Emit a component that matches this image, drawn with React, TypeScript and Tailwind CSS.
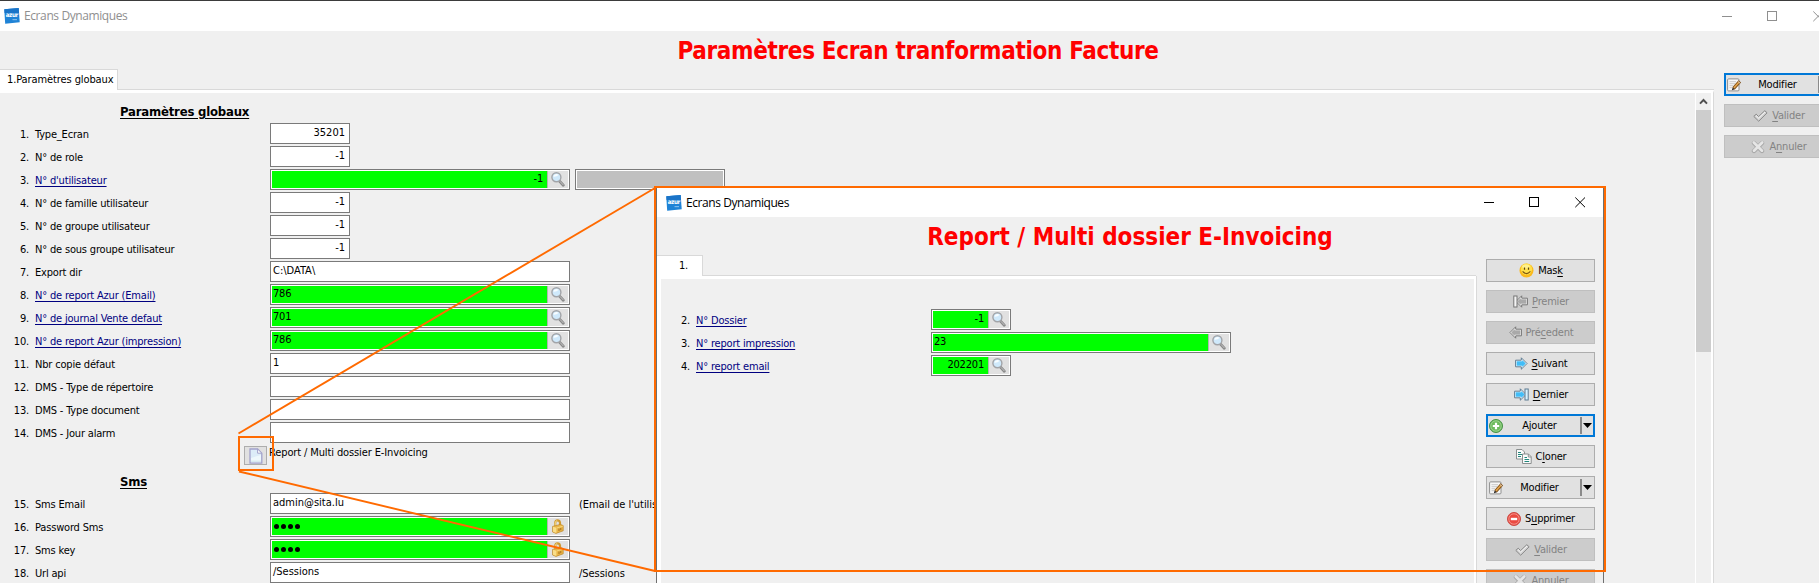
import React from "react";

function AzurLogo() {
  return (
    <svg width="16" height="16" viewBox="0 0 16 16" className="shrink-0">
      <path d="M0.3 1.3 L14.7 0 L15.7 14.3 L1.2 15.8 Z" fill="#1f83d6" />
      <path d="M0.3 1.3 L14.7 0 L15 5 L0.6 5 Z" fill="#1a74c8" />
      <text x="7.9" y="9" textAnchor="middle" fontSize="6.2" fontWeight="700" fill="#ffffff" fontFamily="DejaVu Sans Condensed, sans-serif" textLength="12.5">azur</text>
      <rect x="8.5" y="11" width="4.5" height="1.2" fill="#7cb8ea" />
    </svg>
  );
}

function Magnifier() {
  return (
    <svg width="14" height="15" viewBox="0 0 14 15" className="shrink-0">
      <path d="M8.4 9 L12.3 13.2" stroke="#8a8a8a" strokeWidth="2.8" strokeLinecap="round" />
      <path d="M9.2 9.6 L12.2 12.8" stroke="#c4c4c4" strokeWidth="1" strokeLinecap="round" />
      <circle cx="5.4" cy="5.2" r="4.5" fill="#cfe9fb" stroke="#a2a4a8" strokeWidth="1.4" />
      <path d="M2.4 4.8 A3 3 0 0 1 7.6 3 A6 5 0 0 1 2.4 4.8Z" fill="#f8fdff" />
    </svg>
  );
}

function Padlock() {
  return (
    <svg width="14" height="15" viewBox="0 0 14 15" className="shrink-0">
      <path d="M4.2 7.5 V3.8 Q4.4 1.4 6.4 1.3 Q8.6 1.2 9 3.6 V6.5" fill="none" stroke="#cf9a32" strokeWidth="2.2" />
      <path d="M4.2 7 V3.9 Q4.5 1.9 6.2 1.6" fill="none" stroke="#f8e08e" strokeWidth="1" />
      <path d="M1.6 7.4 L9.4 5.4 L12.2 6.6 V11.8 L5 14.4 L1.6 13Z" fill="#eab547" stroke="#bd8626" strokeWidth="0.7" />
      <path d="M2 7.8 L5.4 8.8 V14 L2 12.8Z" fill="#f9de88" />
      <path d="M5.6 9 L11.8 7.2" stroke="#f7d77c" strokeWidth="1" />
      <path d="M8 9.6 V12 M9.8 9 V11.2" stroke="#9a6415" strokeWidth="0.9" />
    </svg>
  );
}

function DocIcon() {
  return (
    <svg width="14" height="16" viewBox="0 0 14 16">
      <path d="M1 1 H8.6 L12.8 5.2 V15 H1Z" fill="#dcecf8" stroke="#a3a3cb" strokeWidth="1.3" />
      <path d="M2 10 L12 7 V14.2 H2Z" fill="#eef8fc" />
      <path d="M8.6 1 V5.2 H12.8Z" fill="#ffffff" stroke="#a3a3cb" />
      <path d="M2.5 13.2 H12" stroke="#a9cbd9" strokeDasharray="1 1" />
    </svg>
  );
}

function Smiley() {
  return (
    <svg width="15" height="15" viewBox="0 0 15 15">
      <circle cx="7.5" cy="7.5" r="7" fill="#fbb91c" />
      <circle cx="7.5" cy="6.2" r="5.6" fill="#ffe04a" />
      <ellipse cx="7" cy="3.4" rx="3.8" ry="2" fill="#fff08c" />
      <path d="M5.5 4.5 V6.8 M9.5 4.5 V6.8" stroke="#5c4310" strokeWidth="1.2" />
      <path d="M3.6 8.4 Q7.5 12.8 11.4 8.4" fill="none" stroke="#7a5410" strokeWidth="1.1" />
    </svg>
  );
}

function ArrowIcon({ dir, bar, off }: { dir: "left" | "right"; bar?: boolean; off?: boolean }) {
  const line = off ? "#747474" : "#5d7b91";
  const fill = off ? "#a9a9a9" : "#42bdf7";
  return (
    <svg width={bar ? 15 : 13} height="13" viewBox={bar ? "0 0 15 13" : "0 0 13 13"} className={dir === "left" ? "-scale-x-100" : ""}>
      <path d="M0.6 3.2 H6.3 V0.8 L12 6.5 L6.3 12.2 V9.8 H0.6Z" fill="#ffffff" stroke={line} strokeWidth="1" />
      <path d="M1.6 4.2 H7.3 V3 L10.8 6.5 L7.3 10 V8.8 H1.6Z" fill={fill} />
      {bar && <rect x="11" y="1" width="3.2" height="11" fill={off ? "#f4f4f4" : "#d9f2ff"} stroke={line} strokeWidth="1" />}
    </svg>
  );
}

function PlusIcon() {
  return (
    <svg width="14" height="14" viewBox="0 0 14 14">
      <circle cx="7" cy="7" r="6.5" fill="#6dbb5e" stroke="#479145" />
      <circle cx="7" cy="7" r="5.2" fill="none" stroke="#a4d797" strokeWidth="0.8" />
      <path d="M7 3.8 V10.2 M3.8 7 H10.2" stroke="#ffffff" strokeWidth="2.2" />
    </svg>
  );
}

function MinusIcon() {
  return (
    <svg width="14" height="14" viewBox="0 0 14 14">
      <circle cx="7" cy="7" r="6.5" fill="#ea4a41" stroke="#c94a44" />
      <circle cx="7" cy="7" r="5.2" fill="none" stroke="#f79f97" strokeWidth="0.8" />
      <path d="M3.8 7 H10.2" stroke="#ffffff" strokeWidth="2.4" />
    </svg>
  );
}

function CloneIcon() {
  return (
    <svg width="16" height="15" viewBox="0 0 16 15">
      <path d="M0.5 0.5 H6 L8.5 3 V10 H0.5Z" fill="#fbfbfb" stroke="#8a8f8f" />
      <path d="M2 3.5 H5 M2 5.5 H6 M2 7.5 H5" stroke="#22877c" />
      <path d="M6.5 5 H12.5 L15.2 7.7 V14.5 H6.5Z" fill="#fbfbfb" stroke="#8a8f8f" />
      <path d="M12.3 5 V8 H15" fill="none" stroke="#8a8f8f" />
      <path d="M8.5 8.5 H11 M8.5 10.5 H13.2 M8.5 12.5 H13.2" stroke="#22877c" />
    </svg>
  );
}

function EditIcon() {
  return (
    <svg width="15" height="14" viewBox="0 0 15 14">
      <rect x="0.6" y="0.9" width="11.4" height="12" rx="1" fill="#f7f7f7" stroke="#8f8f8f" />
      <path d="M2.5 3.7 H9 M2.5 5.7 H8 M2.5 7.7 H6 M2.5 9.7 H5" stroke="#c9c9c9" />
      <path d="M6.6 10.4 L12.8 3.4" stroke="#7c4b13" strokeWidth="3.4" />
      <path d="M6.9 9.9 L12.4 3.7" stroke="#e0a24c" strokeWidth="1.7" />
      <path d="M4.9 12.2 L5.7 9.4 L7.8 11.2Z" fill="#1f1a16" />
      <path d="M11.2 3.6 L13.2 5.4" stroke="#d8d8d8" strokeWidth="0.9" />
    </svg>
  );
}

function CheckIcon() {
  return (
    <svg width="15" height="12" viewBox="0 0 15 12">
      <path d="M0.8 6.4 L3.2 4.2 L5.6 6.6 L11.8 0.7 L14.1 2.8 L5.7 11.2Z" fill="#d6d6d6" stroke="#868686" />
      <path d="M3 5.5 L5.6 8 L12 2" fill="none" stroke="#f4f4f4" />
    </svg>
  );
}

function CrossIcon() {
  return (
    <svg width="14" height="14" viewBox="0 0 14 14">
      <path d="M3 3 L11 11 M11 3 L3 11" stroke="#a6a6a6" strokeWidth="4.4" strokeLinecap="round" />
      <path d="M2.8 2.6 L11 10.8 M11.2 2.6 L3 10.8" stroke="#e6e6e6" strokeWidth="2.8" strokeLinecap="round" />
    </svg>
  );
}

function WindowControls({ dim }: { dim?: boolean }) {
  return (
    <svg width="102" height="11" viewBox="0 0 102 11" className={dim ? "shrink-0 text-[#8f8f8f]" : "shrink-0 text-black"} fill="none" stroke="currentColor">
      <path d="M0 5.5 H10" />
      <rect x="45.5" y="0.5" width="9" height="9" />
      <path d="M91.3 0.5 L101 10.2 M101 0.5 L91.3 10.2" />
    </svg>
  );
}

function Mnemonic({ text }: { text: string }) {
  const [before, key, after] = text.split("_");
  return (
    <span className="whitespace-pre pt-[2px]">
      {before}
      {key && <span className="underline underline-offset-2">{key}</span>}
      {after}
    </span>
  );
}

function ActionButton({ icon, label, disabled }: { icon: React.ReactNode; label: string; disabled?: boolean }) {
  return (
    <button
      className={
        disabled
          ? "flex h-[23px] w-[109px] shrink-0 items-center justify-center gap-1 border border-[#bfbfbf] bg-[#cccccc] pl-px text-[#838383]"
          : "flex h-[23px] w-[109px] shrink-0 items-center justify-center gap-1 border border-[#adadad] bg-[#e1e1e1] pl-px text-black"
      }
    >
      {icon}
      <Mnemonic text={label} />
    </button>
  );
}

function SplitButton({ icon, label, focused }: { icon: React.ReactNode; label: string; focused?: boolean }) {
  return (
    <button
      className={
        focused
          ? "flex h-[23px] w-[109px] shrink-0 items-center border-2 border-[#0078d7] bg-[#e1e1e1] pl-px"
          : "flex h-[23px] w-[109px] shrink-0 items-center border border-[#adadad] bg-[#e1e1e1] pl-[2px] pr-px"
      }
    >
      <span className="w-[15px]">{icon}</span>
      <span className="flex-1 pt-[2px] pl-[9px] text-center">{label}</span>
      <span className="ml-[14px] h-[17px] w-[2px] bg-[#8a8a8a]" />
      <svg width="11" height="7" viewBox="0 0 11 7">
        <path d="M1 1 H10 L5.5 6Z" fill="#000" />
      </svg>
    </button>
  );
}

type Kind = "num" | "text" | "lookup" | "numLookup" | "secret";

function Field({ kind, value }: { kind: Kind; value: string }) {
  const width = kind === "num" || kind === "numLookup" ? "w-[80px]" : "w-[300px]";
  if (kind === "num" || kind === "text") {
    return (
      <div className={`${width} flex h-[21px] shrink-0 items-center border border-[#7a7a7a] bg-white pl-[2px] pr-1 tracking-normal ${kind === "num" ? "justify-end" : ""}`}>
        {value}
      </div>
    );
  }
  const right = kind === "numLookup" || value === "-1";
  return (
    <div className={`${width} flex h-[21px] shrink-0 border border-[#7a7a7a] bg-white p-px`}>
      <div className={`flex flex-1 items-center bg-[#00ff00] pl-px pr-[4px] ${right ? "justify-end" : ""}`}>
        {kind === "secret" ? (
          <span className="flex gap-[2px] pl-px">
            {[0, 1, 2, 3].map((i) => (
              <span key={i} className="size-[5px] rounded-full bg-black" />
            ))}
          </span>
        ) : (
          value
        )}
      </div>
      <div className="flex w-[21px] items-center justify-center border-l border-[#b4b4b4] bg-[#e1e1e1]">
        {kind === "secret" ? <Padlock /> : <Magnifier />}
      </div>
    </div>
  );
}

type Row = { n: number; label: string; kind: Kind; value: string; link?: boolean; note?: string; extra?: boolean };

const globalRows: Row[] = [
  { n: 1, label: "Type_Ecran", kind: "num", value: "35201" },
  { n: 2, label: "N° de role", kind: "num", value: "-1" },
  { n: 3, label: "N° d'utilisateur", kind: "lookup", value: "-1", link: true, extra: true },
  { n: 4, label: "N° de famille utilisateur", kind: "num", value: "-1" },
  { n: 5, label: "N° de groupe utilisateur", kind: "num", value: "-1" },
  { n: 6, label: "N° de sous groupe utilisateur", kind: "num", value: "-1" },
  { n: 7, label: "Export dir", kind: "text", value: "C:\\DATA\\" },
  { n: 8, label: "N° de report Azur (Email)", kind: "lookup", value: "786", link: true },
  { n: 9, label: "N° de journal Vente defaut", kind: "lookup", value: "701", link: true },
  { n: 10, label: "N° de report Azur (impression)", kind: "lookup", value: "786", link: true },
  { n: 11, label: "Nbr copie défaut", kind: "text", value: "1" },
  { n: 12, label: "DMS - Type de répertoire", kind: "text", value: "" },
  { n: 13, label: "DMS - Type document", kind: "text", value: "" },
  { n: 14, label: "DMS - Jour alarm", kind: "text", value: "" },
];

const smsRows: Row[] = [
  { n: 15, label: "Sms Email", kind: "text", value: "admin@sita.lu", note: "(Email de l'utilisateur)" },
  { n: 16, label: "Password Sms", kind: "secret", value: "" },
  { n: 17, label: "Sms key", kind: "secret", value: "" },
  { n: 18, label: "Url api", kind: "text", value: "/Sessions", note: "/Sessions" },
];

const dossierRows: Row[] = [
  { n: 2, label: "N° Dossier", kind: "numLookup", value: "-1", link: true },
  { n: 3, label: "N° report impression", kind: "lookup", value: "23", link: true },
  { n: 4, label: "N° report email", kind: "numLookup", value: "202201", link: true },
];

function FormRow({ row }: { row: Row }) {
  return (
    <div className="flex h-[23px] shrink-0 items-start whitespace-nowrap">
      <div className="w-[29px] text-right leading-[24px]">{row.n}.</div>
      <div className="w-[241px] shrink-0 pl-[6px] leading-[24px] tracking-[-0.18px]">
        <span className={row.link ? "text-[#000080] underline underline-offset-2" : ""}>{row.label}</span>
      </div>
      <Field kind={row.kind} value={row.value} />
      {row.extra && (
        <div className="ml-[5px] h-[21px] w-[150px] border border-[#7a7a7a] bg-[#c0c0c0] shadow-[inset_0_0_0_1px_#fff]" />
      )}
      {row.note && <div className="ml-[9px] leading-[24px] tracking-[-0.05px]">{row.note}</div>}
    </div>
  );
}

function SectionTitle({ children }: { children: React.ReactNode }) {
  return (
    <div className="h-6 shrink-0 pl-[120px] text-[13px] font-bold leading-[26px] tracking-[-0.2px] underline underline-offset-2">
      {children}
    </div>
  );
}

function Dialog() {
  return (
    <div className="absolute left-[656px] top-[188px] flex h-[420px] w-[948px] flex-col border-x border-[#6f6f6f] bg-[#f0f0f0]">
      <div className="flex h-[29px] shrink-0 items-center bg-white pl-[9px] pr-[17px]">
        <AzurLogo />
        <span className="ml-1 flex-1 font-['Open_Sans',sans-serif] text-[12px] tracking-[-0.43px]">Ecrans Dynamiques</span>
        <WindowControls />
      </div>
      <h2 className="h-[38px] shrink-0 text-center text-[24px] font-bold leading-[41px] tracking-normal text-[#ff0000]">
        Report / Multi dossier E-Invoicing
      </h2>
      <div className="flex min-h-0 flex-1">
        <div className="flex w-[819px] shrink-0 flex-col">
          <div className="flex h-[21px] shrink-0">
            <div className="w-[46px] border-r border-t border-[#d9d9d9] bg-white pl-[22px] leading-[20px]">1.</div>
            <div className="flex-1 border-b border-[#d9d9d9]" />
          </div>
          <div className="flex flex-1 flex-col border-4 border-b-0 border-r-2 border-t-[3px] border-white bg-[#f0f0f0] pt-[30px] shadow-[1px_0_0_#d9d9d9]">
            {dossierRows.map((row) => (
              <FormRow key={row.n} row={row} />
            ))}
          </div>
        </div>
        <div className="ml-[10px] flex flex-col gap-2 pt-1">
          <ActionButton icon={<Smiley />} label="Mas_k_" />
          <ActionButton icon={<ArrowIcon dir="left" bar off />} label="_P_remier" disabled />
          <ActionButton icon={<ArrowIcon dir="left" off />} label="Pré_c_edent" disabled />
          <ActionButton icon={<ArrowIcon dir="right" />} label="_S_uivant" />
          <ActionButton icon={<ArrowIcon dir="right" bar />} label="_D_ernier" />
          <SplitButton icon={<PlusIcon />} label="Ajouter" focused />
          <ActionButton icon={<CloneIcon />} label="C_l_oner" />
          <SplitButton icon={<EditIcon />} label="Modifier" />
          <ActionButton icon={<MinusIcon />} label="S_u_pprimer" />
          <ActionButton icon={<CheckIcon />} label="_V_alider" disabled />
          <ActionButton icon={<CrossIcon />} label="A_n_nuler" disabled />
        </div>
      </div>
    </div>
  );
}

export default function App() {
  return (
    <div className="relative flex h-[583px] w-[1819px] flex-col overflow-hidden bg-[#f0f0f0] font-['DejaVu_Sans_Condensed','DejaVu_Sans',sans-serif] text-[11px] tracking-[-0.2px] text-black">
      <div className="flex h-[31px] w-[1836px] shrink-0 items-center border-t border-[#3b3b3b] bg-white pl-1 pr-3">
        <AzurLogo />
        <span className="ml-1 flex-1 font-['Open_Sans',sans-serif] text-[12px] tracking-[-0.4px] text-[#8f8f8f]">Ecrans Dynamiques</span>
        <WindowControls dim />
      </div>
      <h1 className="h-[38px] w-[1836px] shrink-0 text-center text-[24px] font-bold leading-[41px] tracking-[-0.33px] text-[#ff0000]">
        Paramètres Ecran tranformation Facture
      </h1>
      <div className="flex min-h-0 flex-1">
        <div className="flex w-[1714px] shrink-0 flex-col">
          <div className="flex h-[21px] shrink-0">
            <div className="w-[118px] border-r border-t border-[#d9d9d9] bg-white pl-[7px] leading-[20px] tracking-[-0.1px]">1.Paramètres globaux</div>
            <div className="flex-1 border-b border-[#d9d9d9]" />
          </div>
          <div className="flex min-h-0 flex-1 border-r border-t-[3px] border-r-[#d9d9d9] border-t-white">
            <div className="flex flex-1 flex-col overflow-hidden pt-[6px]">
              <SectionTitle>Paramètres globaux</SectionTitle>
              {globalRows.map((row) => (
                <FormRow key={row.n} row={row} />
              ))}
              <div className="flex h-6 shrink-0 items-start pl-[244px]">
                <button className="mt-px flex h-[19px] w-[23px] items-center justify-center border border-[#adadad] bg-[#e1e1e1]">
                  <DocIcon />
                </button>
                <span className="ml-[2px] leading-[15px] tracking-[-0.12px]">Report / Multi dossier E-Invoicing</span>
              </div>
              <SectionTitle>Sms</SectionTitle>
              {smsRows.map((row) => (
                <FormRow key={row.n} row={row} />
              ))}
            </div>
            <div className="flex w-[18px] shrink-0 flex-col border-l border-r-2 border-white">
              <div className="flex h-[17px] items-center justify-center">
                <svg width="9" height="7" viewBox="0 0 9 7" fill="none">
                  <path d="M1 5.6 L4.5 2 L8 5.6" stroke="#505050" strokeWidth="2" />
                </svg>
              </div>
              <div className="h-[242px] bg-[#cdcdcd]" />
            </div>
          </div>
        </div>
        <div className="ml-[10px] flex flex-col gap-2 pt-1">
          <SplitButton icon={<EditIcon />} label="Modifier" focused />
          <ActionButton icon={<CheckIcon />} label="_V_alider" disabled />
          <ActionButton icon={<CrossIcon />} label="A_n_nuler" disabled />
        </div>
      </div>

      <Dialog />

      <svg width="1819" height="583" viewBox="0 0 1819 583" className="pointer-events-none absolute left-0 top-0" fill="none" stroke="#ff6a00">
        <rect x="655" y="187" width="950" height="384" strokeWidth="2" />
        <rect x="239" y="437" width="34" height="33" strokeWidth="2" />
        <path d="M238.5 433.5 L655 188" strokeWidth="1.9" />
        <path d="M239 471.5 L655 571" strokeWidth="1.9" />
      </svg>
    </div>
  );
}
